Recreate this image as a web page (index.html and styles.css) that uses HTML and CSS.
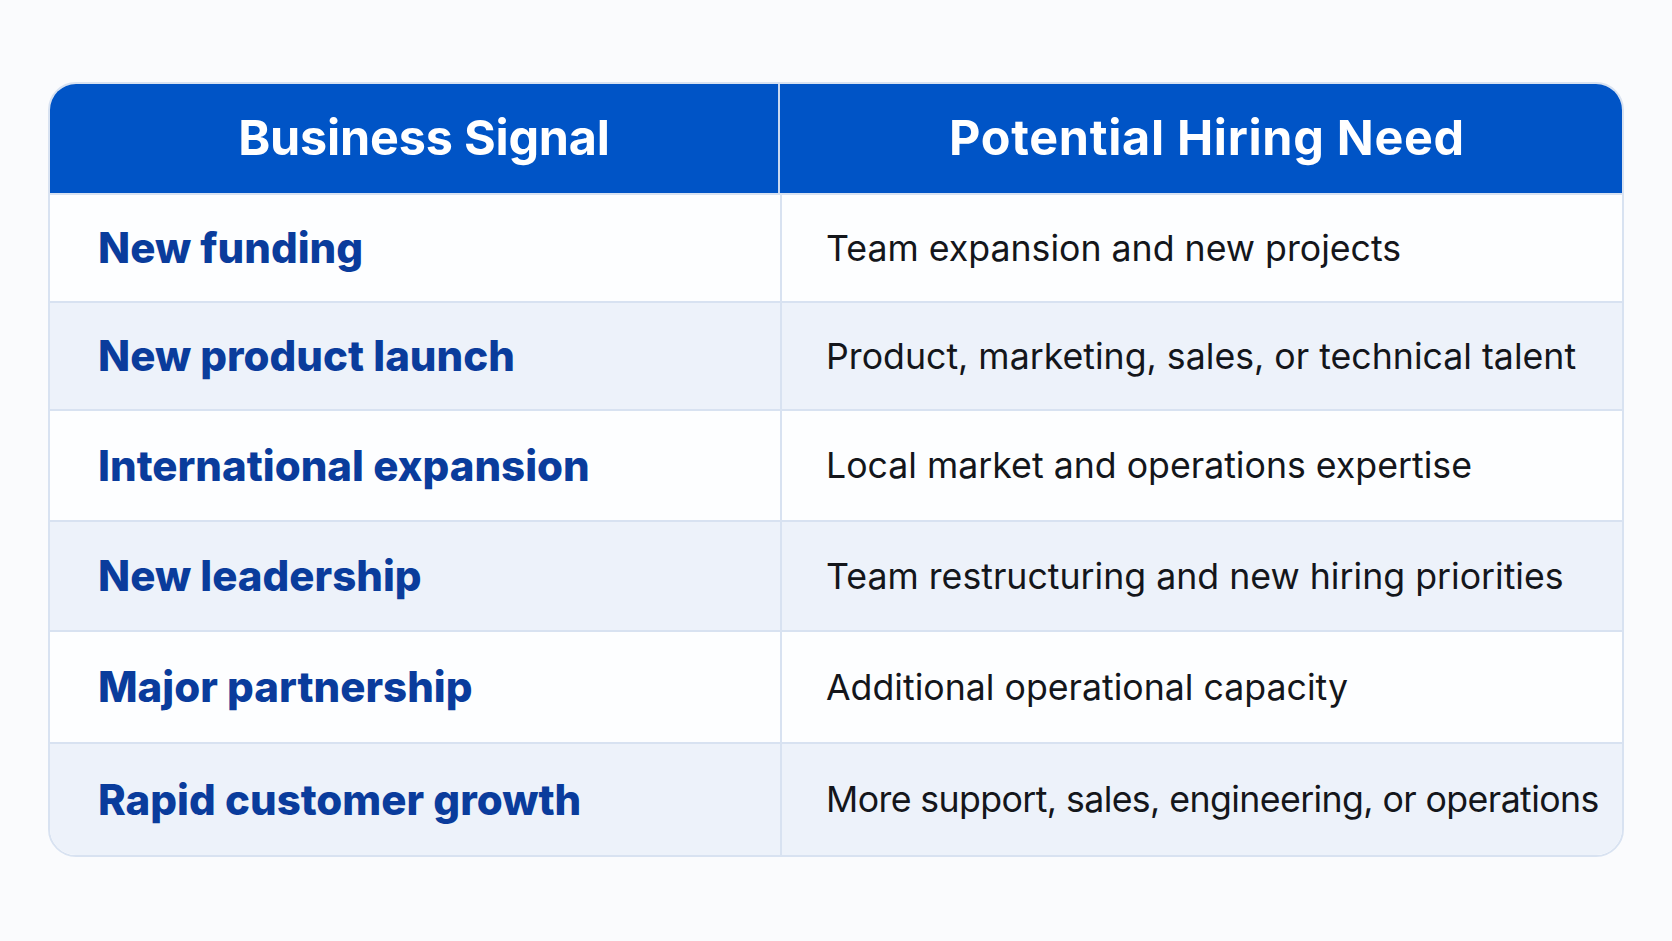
FILE: index.html
```html
<!DOCTYPE html>
<html lang="en">
<head>
<meta charset="utf-8">
<title>Business Signals and Hiring Needs</title>
<link rel="stylesheet" href="styles.css">
</head>
<body>
<main class="page">
  <div class="table">
    <div class="row head">
      <div class="cell">Business Signal</div>
      <div class="cell">Potential Hiring Need</div>
    </div>
    <div class="row">
      <div class="cell signal">New funding</div>
      <div class="cell need">Team expansion and new projects</div>
    </div>
    <div class="row alt">
      <div class="cell signal">New product launch</div>
      <div class="cell need">Product, marketing, sales, or technical talent</div>
    </div>
    <div class="row">
      <div class="cell signal">International expansion</div>
      <div class="cell need">Local market and operations expertise</div>
    </div>
    <div class="row alt">
      <div class="cell signal">New leadership</div>
      <div class="cell need">Team restructuring and new hiring priorities</div>
    </div>
    <div class="row">
      <div class="cell signal">Major partnership</div>
      <div class="cell need">Additional operational capacity</div>
    </div>
    <div class="row alt">
      <div class="cell signal">Rapid customer growth</div>
      <div class="cell need tight">More support, sales, engineering, or operations</div>
    </div>
  </div>
</main>
</body>
</html>
```
FILE: styles.css
```css
* { box-sizing: border-box; }
html, body { margin: 0; padding: 0; }
body {
  background: #fafbfd;
  font-family: "Inter", "Liberation Sans", sans-serif;
}
.page {
  width: 1672px;
  height: 941px;
  padding: 82px 48px 0 48px;
}
.table {
  width: 1576px;
  height: 775px;
  display: grid;
  grid-template-rows: 109px 108fr 109fr 111fr 111fr 112fr 114fr;
  border: 2px solid #d8e2f1;
  border-radius: 28px;
  overflow: hidden;
  background: #fdfeff;
}
.row {
  display: grid;
  grid-template-columns: 730px 1fr;
  border-top: 2px solid #d8e2f1;
}
.row.head {
  border-top: none;
  background: #0054c6;
  margin: -2px -2px 0 -2px;
}
.row.alt { background: #edf2fa; }
.cell {
  display: flex;
  align-items: center;
  white-space: nowrap;
}
.cell + .cell { border-left: 2px solid #d8e2f1; }
.head .cell {
  justify-content: center;
  color: #ffffff;
  font-weight: 700;
  font-size: 48.5px;
  letter-spacing: -0.2px;
}
.head .cell:first-child { padding-left: 22px; }
.head .cell + .cell {
  border-left-color: #c9d8f0;
  padding-left: 10px;
  letter-spacing: 0.7px;
}
.signal {
  padding-left: 48px;
  color: #0a3c9c;
  font-weight: 800;
  font-size: 42px;
}
.need {
  padding-left: 44px;
  color: #14161b;
  font-weight: 400;
  font-size: 35.7px;
}
.need.tight { letter-spacing: -0.6px; }
```
